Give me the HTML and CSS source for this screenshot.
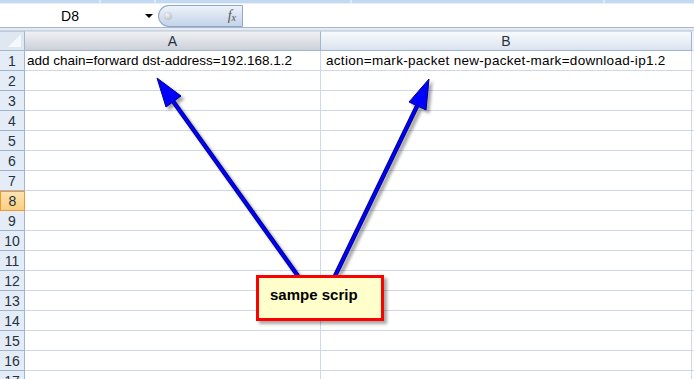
FILE: index.html
```html
<!DOCTYPE html>
<html>
<head>
<meta charset="utf-8">
<link rel="stylesheet" href="styles.css">
</head>
<body>
<div class="app">
  <div class="ribbon-edge">
    <span class="seg s1"></span><span class="seg s2"></span><span class="seg s3"></span><span class="seg s4"></span>
  </div>
  <div class="formula-bar">
    <div class="name-box"><span class="name">D8</span><span class="drop"></span></div>
    <div class="pill"><span class="knob"></span><span class="fx">f<sub>x</sub></span></div>
    <div class="input"></div>
  </div>
  <div class="sep"></div>
  <div class="sheet">
    <div class="row head">
      <div class="corner"><span class="tri"></span></div>
      <div class="colhead ca">A</div>
      <div class="colhead cb">B</div>
      <div class="rest"></div>
    </div>
    <div class="row"><div class="rh">1</div><div class="cell ca">add chain=forward dst-address=192.168.1.2</div><div class="cell cb">action=mark-packet new-packet-mark=download-ip1.2</div><div class="rest"></div></div>
    <div class="row"><div class="rh">2</div><div class="cell ca"></div><div class="cell cb"></div><div class="rest"></div></div>
    <div class="row"><div class="rh">3</div><div class="cell ca"></div><div class="cell cb"></div><div class="rest"></div></div>
    <div class="row"><div class="rh">4</div><div class="cell ca"></div><div class="cell cb"></div><div class="rest"></div></div>
    <div class="row"><div class="rh">5</div><div class="cell ca"></div><div class="cell cb"></div><div class="rest"></div></div>
    <div class="row"><div class="rh">6</div><div class="cell ca"></div><div class="cell cb"></div><div class="rest"></div></div>
    <div class="row"><div class="rh">7</div><div class="cell ca"></div><div class="cell cb"></div><div class="rest"></div></div>
    <div class="row"><div class="rh sel">8</div><div class="cell ca"></div><div class="cell cb"></div><div class="rest"></div></div>
    <div class="row"><div class="rh">9</div><div class="cell ca"></div><div class="cell cb"></div><div class="rest"></div></div>
    <div class="row"><div class="rh">10</div><div class="cell ca"></div><div class="cell cb"></div><div class="rest"></div></div>
    <div class="row"><div class="rh">11</div><div class="cell ca"></div><div class="cell cb"></div><div class="rest"></div></div>
    <div class="row"><div class="rh">12</div><div class="cell ca"></div><div class="cell cb"></div><div class="rest"></div></div>
    <div class="row"><div class="rh">13</div><div class="cell ca"></div><div class="cell cb"></div><div class="rest"></div></div>
    <div class="row"><div class="rh">14</div><div class="cell ca"></div><div class="cell cb"></div><div class="rest"></div></div>
    <div class="row"><div class="rh">15</div><div class="cell ca"></div><div class="cell cb"></div><div class="rest"></div></div>
    <div class="row"><div class="rh">16</div><div class="cell ca"></div><div class="cell cb"></div><div class="rest"></div></div>
    <div class="row"><div class="rh">17</div><div class="cell ca"></div><div class="cell cb"></div><div class="rest"></div></div>
  </div>

  <svg class="arrows" width="694" height="379" viewBox="0 0 694 379">
    <defs>
      <filter id="sh" x="-20%" y="-20%" width="140%" height="140%">
        <feDropShadow dx="3" dy="3" stdDeviation="1.5" flood-color="#000" flood-opacity="0.35"/>
      </filter>
    </defs>
    <g filter="url(#sh)">
      <line x1="298" y1="276" x2="170" y2="97" stroke="#00008a" stroke-width="4.5"/>
      <line x1="298" y1="276" x2="170" y2="97" stroke="#0000ff" stroke-width="2.5"/>
      <polygon points="157,78 166,107 181,96" fill="#0000ff" stroke="#00008a" stroke-width="1"/>
      <line x1="335" y1="276" x2="420" y2="100" stroke="#00008a" stroke-width="4.5"/>
      <line x1="335" y1="276" x2="420" y2="100" stroke="#0000ff" stroke-width="2.5"/>
      <polygon points="429,79 426,110 409,102" fill="#0000ff" stroke="#00008a" stroke-width="1"/>
    </g>
  </svg>

  <div class="callout">sampe scrip</div>
</div>
</body>
</html>
```

FILE: styles.css
```css
* { box-sizing: border-box; }
html, body { margin: 0; padding: 0; }
body {
  width: 694px;
  height: 379px;
  overflow: hidden;
  background: #ffffff;
  font-family: "Liberation Sans", Arial, sans-serif;
}
.app {
  position: relative;
  width: 694px;
  height: 379px;
  overflow: hidden;
}
.ribbon-edge {
  height: 4px;
  background: #c3d9f1;
  border-bottom: 1px solid #e8f1fb;
  display: flex;
}
.seg { height: 3px; border-right: 2px solid #dfeaf7; }
.s1 { width: 101px; }
.s2 { width: 55px; }
.s3 { width: 196px; }
.s4 { width: 253px; }

.formula-bar {
  height: 24px;
  display: flex;
  background: #ffffff;
  border-bottom: 1px solid #a6b8cf;
}
.name-box {
  width: 158px;
  display: flex;
  align-items: center;
  position: relative;
}
.name {
  width: 140px;
  text-align: center;
  font-size: 14px;
  color: #000;
}
.drop {
  width: 0; height: 0;
  margin-left: 5px;
  border-left: 4px solid transparent;
  border-right: 4px solid transparent;
  border-top: 4px solid #000;
}
.pill {
  width: 85px;
  height: 22px;
  margin-top: 1px;
  border: 1px solid #8fa6c4;
  border-right: 1px solid #93a8c6;
  border-radius: 11px 0 0 11px;
  background: linear-gradient(#eef3fa, #d7e2f1 50%, #c5d4e9);
  display: flex;
  align-items: center;
  justify-content: space-between;
  padding: 0 6px 0 5px;
}
.knob {
  width: 8px; height: 8px;
  border-radius: 50%;
  background: radial-gradient(circle at 40% 35%, #f4f4f4, #a9aeb6);
}
.fx {
  font-family: "Liberation Serif", serif;
  font-style: italic;
  font-size: 14px;
  color: #555;
}
.fx sub { font-size: 10px; vertical-align: -1px; }
.input { flex: 1; background: #fff; }

.sep {
  height: 3px;
  background: #e6ebf1;
  border-bottom: 1px solid #c9d3df;
}

.sheet { display: flex; flex-direction: column; }
.row { display: flex; height: 20px; }
.corner {
  width: 25px;
  height: 20px;
  background: #dfe7f1;
  border-right: 1px solid #9eb6ce;
  border-bottom: 1px solid #9eb6ce;
  border-top: 1px solid #b9cbe0;
  position: relative;
}
.tri {
  position: absolute;
  right: 3px;
  bottom: 3px;
  width: 0; height: 0;
  border-left: 13px solid transparent;
  border-bottom: 13px solid #f5f8fc;
}
.colhead {
  height: 20px;
  border-right: 1px solid #9eb6ce;
  border-bottom: 1px solid #9eb6ce;
  border-top: 1px solid #d5dde8;
  text-align: center;
  font-size: 14px;
  line-height: 18px;
  color: #27313d;
}
.colhead.ca { background: linear-gradient(#eef0f3, #dadee4 60%, #ccd0d7); }
.colhead.cb { background: linear-gradient(#f7f9fc, #e7edf5 60%, #dae2ee); }
.ca { width: 296px; }
.cb { width: 371px; }
.rest { flex: 1; }
.head .rest { background: #f0f3f7; border-bottom: 1px solid #9eb6ce; }

.rh {
  width: 25px;
  height: 20px;
  background: #e4ecf7;
  border-right: 1px solid #9eb6ce;
  border-bottom: 1px solid #9eb6ce;
  text-align: center;
  font-size: 14px;
  line-height: 20px;
  color: #27313d;
}
.rh.sel {
  background: linear-gradient(#fde3b0, #f8cf82);
  border: 1px solid #f29536;
  line-height: 18px;
}
.cell {
  height: 20px;
  border-right: 1px solid #d0d7e5;
  border-bottom: 1px solid #d0d7e5;
  font-size: 13.5px;
  line-height: 20px;
  padding-left: 2px;
  white-space: nowrap;
  overflow: visible;
  color: #000;
}
.cell.cb { padding-left: 5px; letter-spacing: 0.3px; }
.row .rest { border-bottom: 1px solid #d0d7e5; }

.arrows {
  position: absolute;
  left: 0;
  top: 0;
}
.callout {
  position: absolute;
  left: 256px;
  top: 275px;
  width: 128px;
  height: 46px;
  background: #ffffcc;
  border: 3px solid #ff0000;
  box-shadow: 3px 3px 3px rgba(0,0,0,0.35);
  font-weight: bold;
  font-size: 15px;
  color: #000;
  padding: 8px 0 0 11px;
}
```
